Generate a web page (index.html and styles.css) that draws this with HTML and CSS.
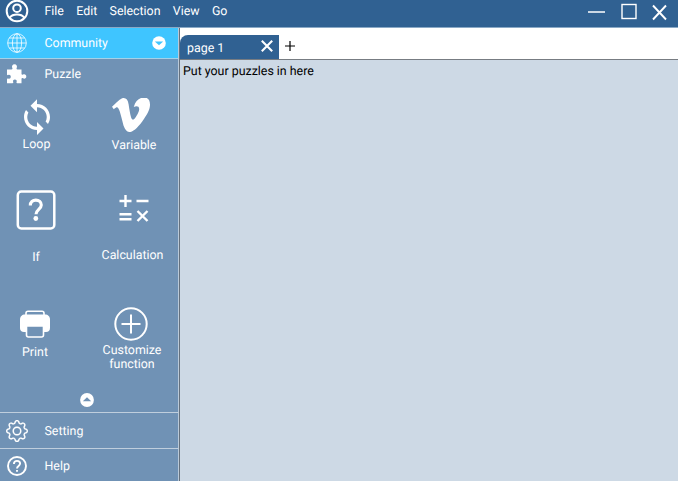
FILE: index.html
```html
<!DOCTYPE html>
<html lang="en">
<head>
<meta charset="utf-8">
<title>Puzzle editor</title>
<link rel="stylesheet" href="styles.css">
</head>
<body>
<header class="titlebar">
  <svg class="avatar" viewBox="0 0 24 24" width="24" height="24" fill="none" stroke="#fff" stroke-width="2"><circle cx="12" cy="12" r="10.3"/><circle cx="12" cy="9.2" r="3.8"/><path d="M4.8 18.6c1.6-2.2 4.2-3 7.200-3s5.600.8 7.200 3"/></svg>
  <nav class="menu"><span>File</span><span>Edit</span><span>Selection</span><span>View</span><span>Go</span></nav>
  <svg class="window-controls" viewBox="0 0 82 20" width="82" height="20" fill="none" stroke="#fff"><path d="M1 10h17" stroke-width="1.500"/><rect x="35" y="2.500" width="14" height="14" stroke-width="1.400"/><path d="M66 3.500l13 14M79 3.500L66 17.500" stroke-width="1.900"/></svg>
</header>
<div class="workspace">
  <aside class="sidebar">
    <div class="row community">
      <svg class="row-icon" viewBox="0 0 20 20" width="20" height="20" fill="none" stroke="#fff" stroke-width=".8"><circle cx="10" cy="10" r="9.300"/><ellipse cx="10" cy="10" rx="4.600" ry="9.300"/><path d="M10 .7v18.600M.7 10h18.600M2.500 5h15M2.500 15h15"/></svg>
      <span>Community</span>
      <svg class="toggle" viewBox="0 0 14 14" width="14" height="14"><circle cx="7" cy="7" r="6.800" fill="#fff"/><path d="M2.800 5.500h8.400L7 9.300z" fill="#3fc5ff"/></svg>
    </div>
    <div class="row puzzle">
      <svg class="row-icon" viewBox="0 0 20 20" width="20" height="20" fill="#fff"><path d="M0 5.500h4.500c1 0 1.200-.6.800-1.400C4.400 2.200 5.500.3 7.500.3s3.100 1.900 2.200 3.800c-.4.800-.2 1.400.8 1.400h4v4.200c0 1 .8 1.200 1.500.8 1.800-1 3.300.2 3.300 1.900s-1.500 2.900-3.300 1.900c-.7-.4-1.500-.2-1.500.8V19.300h-4.300c-.8 0-.9-.5-.6-1.200.6-1.400-.3-2.500-1.700-2.500s-2.300 1.100-1.700 2.500c.3.700.1 1.200-.7 1.200H0v-4.100c0-.8.600-.9 1.200-.6 1.400.7 2.600-.3 2.600-1.800s-1.200-2.500-2.600-1.800c-.6.3-1.200.1-1.200-.7z"/></svg>
      <span>Puzzle</span>
    </div>
    <div class="blocks">
      <div class="block loop"><svg viewBox="4 1 16 22" width="26" height="36" fill="#fff"><path d="M12 4V1L8 5l4 4V6c3.310 0 6 2.690 6 6 0 1.010-.25 1.970-.7 2.800l1.460 1.460C19.540 15.030 20 13.570 20 12c0-4.420-3.580-8-8-8zm0 14c-3.310 0-6-2.690-6-6 0-1.010.25-1.970.7-2.800L5.240 7.740C4.460 8.970 4 10.430 4 12c0 4.420 3.580 8 8 8v3l4-4-4-4v3z"/></svg><span>Loop</span></div>
      <div class="block variable"><svg viewBox="0 69 448 383" width="38" height="34" preserveAspectRatio="none" fill="#fff"><path d="M447.800 153.600c-2 43.600-32.400 103.300-91.400 179.100-60.900 79.200-112.400 118.800-154.600 118.800-26.100 0-48.200-24.100-66.300-72.300C100.300 250 85.300 174.300 56.200 174.300c-3.400 0-15.100 7.100-35.200 21.100L0 168.200c51.600-45.300 100.900-95.700 131.800-98.500 34.900-3.400 56.300 20.500 64.400 71.500 28.700 181.500 41.400 208.900 93.600 126.700 18.700-29.600 28.800-52.100 30.200-67.600 4.800-45.900-35.800-42.800-63.300-31 22-72.100 64.100-107.100 126.200-105.100 45.800 1.200 67.500 31.100 64.900 89.400z"/></svg><span>Variable</span></div>
      <div class="block if"><svg viewBox="0 0 40 40" width="40" height="40" fill="none" stroke="#fff"><rect x="1.800" y="1.500" width="36.500" height="37" rx="3.500" stroke-width="2.500"/><path d="M14.300 15.500c0-3.600 2.500-5.400 5.500-5.400 3.200 0 5.500 1.900 5.500 4.900 0 4.200-5.300 4.500-5.300 9.200" stroke-width="3.100"/><circle cx="19.800" cy="28.500" r="2.400" fill="#fff" stroke="none"/></svg><span>If</span></div>
      <div class="block calculation"><svg viewBox="0 0 30 28" width="30" height="28" fill="none" stroke="#fff" stroke-width="2.400"><path d="M.5 7h12M6.500 1v12M17.500 7h12M.5 20.300h12M.5 25.300h12M18.500 17l10 10M28.500 17l-10 10"/></svg><span>Calculation</span></div>
      <div class="block print"><svg viewBox="0 0 32 28" width="32" height="28" fill="none" stroke="#fff" stroke-width="1.600"><rect x="7" y="1.300" width="18" height="8" rx="2"/><path d="M6 4.500h20c3 0 5 2 5 5V18c0 2.500-1.500 4-4 4H5c-2.500 0-4-1.500-4-4V9.500c0-3 2-5 5-5z" fill="#fff" stroke="none"/><path d="M7.500 16h17v9c0 1.200-.8 2-2 2h-13c-1.200 0-2-.8-2-2z" fill="#7092b5"/></svg><span>Print</span></div>
      <div class="block customize"><svg viewBox="0 0 34 34" width="34" height="34" fill="none" stroke="#fff" stroke-width="2"><circle cx="17" cy="17" r="15.700"/><path d="M17 7.500v19M7.500 17h19"/></svg><span>Customize<br>function</span></div>
    </div>
    <div class="collapse"><svg viewBox="0 0 14 14" width="14" height="14"><circle cx="7" cy="7" r="6.900" fill="#fff"/><path d="M2.800 8.200h8.400L7 4.200z" fill="#7092b5"/></svg></div>
    <div class="row setting">
      <svg class="row-icon" viewBox="0 0 16 16" width="22" height="22" fill="#fff" stroke="#fff" stroke-width=".1"><path d="M8 4.754a3.246 3.246 0 1 0 0 6.492 3.246 3.246 0 0 0 0-6.492zM5.754 8a2.246 2.246 0 1 1 4.492 0 2.246 2.246 0 0 1-4.492 0z"/><path d="M9.796 1.343c-.527-1.790-3.065-1.790-3.592 0l-.094.319a.873.873 0 0 1-1.255.52l-.292-.16c-1.640-.892-3.433.902-2.540 2.541l.159.292a.873.873 0 0 1-.52 1.255l-.319.094c-1.790.527-1.790 3.065 0 3.592l.319.094a.873.873 0 0 1 .52 1.255l-.16.292c-.892 1.640.901 3.434 2.541 2.540l.292-.159a.873.873 0 0 1 1.255.52l.094.319c.527 1.790 3.065 1.790 3.592 0l.094-.319a.873.873 0 0 1 1.255-.52l.292.16c1.640.893 3.434-.902 2.540-2.541l-.159-.292a.873.873 0 0 1 .52-1.255l.319-.094c1.790-.527 1.790-3.065 0-3.592l-.319-.094a.873.873 0 0 1-.52-1.255l.16-.292c.893-1.640-.902-3.433-2.541-2.540l-.292.159a.873.873 0 0 1-1.255-.52l-.094-.319zm-2.633.283c.246-.835 1.428-.835 1.674 0l.094.319a1.873 1.873 0 0 0 2.693 1.115l.291-.16c.764-.415 1.600.42 1.184 1.185l-.159.292a1.873 1.873 0 0 0 1.116 2.692l.318.094c.835.246.835 1.428 0 1.674l-.319.094a1.873 1.873 0 0 0-1.115 2.693l.16.291c.415.764-.42 1.600-1.185 1.184l-.291-.159a1.873 1.873 0 0 0-2.693 1.116l-.094.318c-.246.835-1.428.835-1.674 0l-.094-.319a1.873 1.873 0 0 0-2.692-1.115l-.292.16c-.764.415-1.600-.42-1.184-1.185l.159-.291A1.873 1.873 0 0 0 1.945 8.930l-.319-.094c-.835-.246-.835-1.428 0-1.674l.319-.094A1.873 1.873 0 0 0 3.060 4.377l-.16-.292c-.415-.764.42-1.600 1.185-1.184l.292.159a1.873 1.873 0 0 0 2.692-1.115l.094-.319z"/></svg>
      <span>Setting</span>
    </div>
    <div class="row help">
      <svg class="row-icon" viewBox="0 0 20 20" width="20" height="20" fill="none" stroke="#fff" stroke-width="1.900"><circle cx="10" cy="10" r="9"/><path d="M6.900 8c0-2 1.300-3.100 3.100-3.100s3.100 1.100 3.100 2.700c0 2.400-3.100 2.400-3.100 4.900M10 13.900v1.900"/></svg>
      <span>Help</span>
    </div>
  </aside>
  <main class="editor">
    <div class="tabs">
      <div class="tab"><span>page 1</span><svg viewBox="0 0 12 12" width="12" height="12" fill="none" stroke="#fff" stroke-width="2.100"><path d="M.8.8l10.400 10.400M11.200.8L.8 11.200"/></svg></div>
      <svg class="add" viewBox="0 0 10 10" width="10" height="10" stroke="#000" stroke-width="1.200"><path d="M5 0v10M0 5h10"/></svg>
    </div>
    <div class="canvas">Put your puzzles in here</div>
  </main>
</div>
</body>
</html>
```

FILE: styles.css
```css
* { box-sizing: border-box; }
body { margin: 0; width: 678px; height: 481px; overflow: hidden; font: 12.4px/14px Roboto, sans-serif; text-rendering: geometricPrecision; color: #fff; background: #fff; }
svg { display: block; flex: none; }
.titlebar { display: flex; align-items: flex-start; height: 28px; background: #306192; border-bottom: 1px solid #8aa9c6; }
.avatar { margin: -1px 0 0 4.500px; }
.menu { display: flex; gap: 12.300px; margin: 5px 0 0 16px; }
.window-controls { margin: 1.500px 9.500px 0 auto; }
.workspace { display: flex; height: 453px; }
.sidebar { display: flex; flex-direction: column; width: 180px; background: #7092b5; border-right: 1px solid #65717e; box-shadow: inset -1px 0 #b9c9d9; }
.row { display: flex; align-items: center; flex: none; }
.row span { padding-top: 2px; }
.row-icon { margin-left: 6.500px; margin-right: 18px; }
.community { height: 31px; width: 178px; background: #3fc5ff; border-bottom: 1px solid #a4d1e8; }
.toggle { margin-left: auto; margin-right: 12.500px; }
.puzzle { height: 31px; }
.puzzle span { padding-top: 1px; }
.puzzle .row-icon { margin-top: -1px; }
.blocks { display: grid; grid-template-columns: 73px 106px; grid-template-rows: 93px 112px 88px; height: 293px; }
.block { display: flex; flex-direction: column; align-items: center; text-align: center; }
.loop { padding-top: 9px; gap: 3px; }
.variable { padding: 8px 0 0 16px; gap: 7px; }
.variable svg { margin-right: 7px; }
.if { padding: 7px 1px 0 0; gap: 21px; }
.calculation { padding: 11px 0 0 13px; gap: 27px; }
.calculation svg { margin-left: 3px; }
.print { padding: 15px 3px 0 0; gap: 8px; }
.customize { padding: 12px 0 0 12px; gap: 3px; }
.customize svg { margin-right: 2px; }
.collapse { display: flex; justify-content: center; flex: 1; padding: 10px 5px 0 0; }
.setting { height: 36px; border-top: 1px solid #bfcedd; }
.setting .row-icon { margin-left: 5.500px; margin-right: 17px; }
.help { height: 33px; border-top: 1px solid #bfcedd; padding-top: 2px; }
.editor { flex: 1; display: flex; flex-direction: column; }
.tabs { display: flex; align-items: flex-end; height: 32px; border-bottom: 1px solid #777c82; }
.tab { display: flex; align-items: center; justify-content: space-between; width: 99px; height: 24px; padding: 0 6px 0 7px; background: #306192; border-radius: 8px 0 0 0; }
.tab span { margin-top: 3px; }
.tab svg { margin-top: -2px; }
.add { margin: 0 0 8px 5.500px; }
.canvas { flex: 1; padding: 5px 3px; background: #cdd9e5; color: #000; }
```
